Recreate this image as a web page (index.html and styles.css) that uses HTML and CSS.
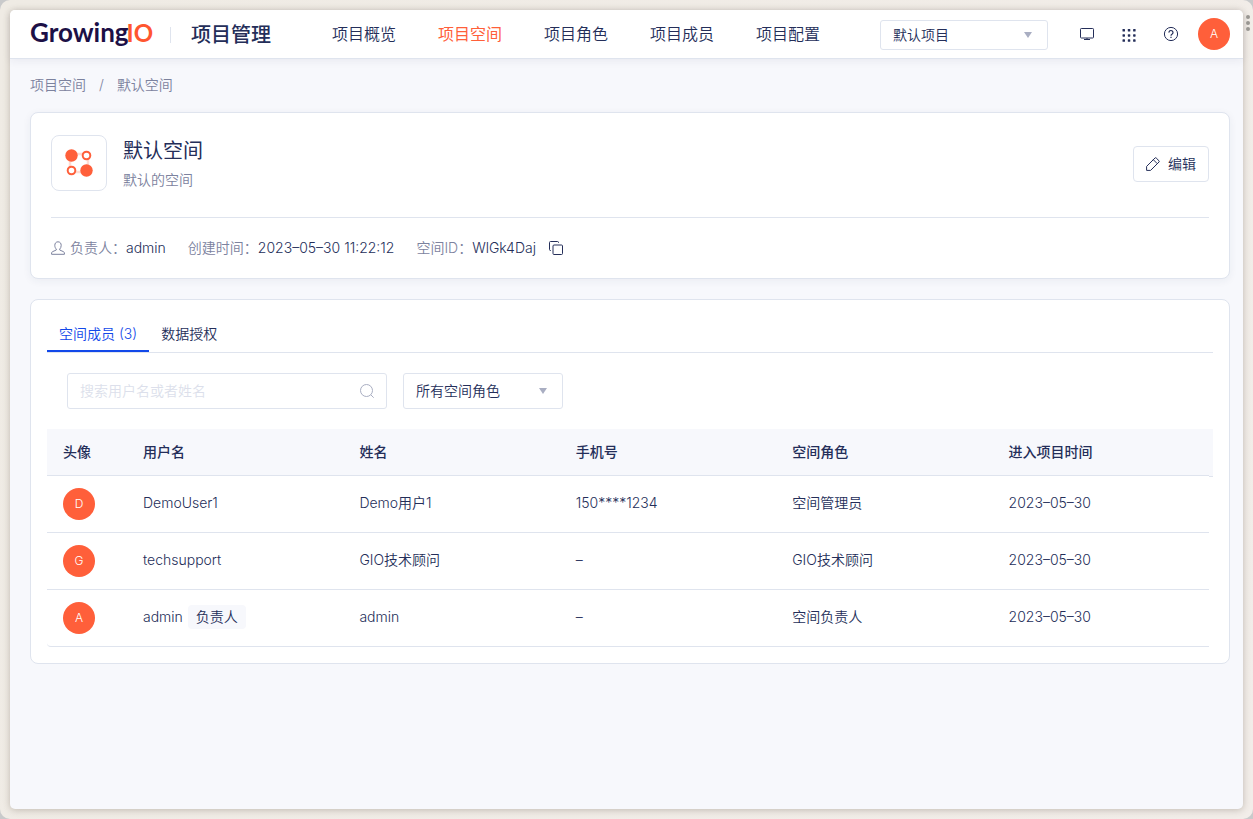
FILE: index.html
```html
<!DOCTYPE html>
<html lang="zh-CN">
<head>
<meta charset="utf-8">
<meta name="viewport" content="width=device-width, initial-scale=1">
<title>项目管理</title>
<link rel="stylesheet" href="styles.css">
</head>
<body>
<div class="frame">
  <div class="frame-dots"><i></i><i></i><i></i></div>
  <div class="window">
    <header class="topbar">
      <a class="logo" href="#">Growing<span class="logo-io">IO</span></a>
      <div class="product">项目管理</div>
      <nav class="nav">
        <a href="#">项目概览</a>
        <a href="#" class="active">项目空间</a>
        <a href="#">项目角色</a>
        <a href="#">项目成员</a>
        <a href="#">项目配置</a>
      </nav>
      <div class="select select-project">
        <select aria-label="项目"><option>默认项目</option></select>
        <svg class="caret" viewBox="0 0 10 8"><path d="M1 1h8L5 7z"/></svg>
      </div>
      <div class="tools">
        <button type="button" aria-label="大屏"><svg viewBox="0 0 16 16"><rect x="1.5" y="2.5" width="13" height="9.500" rx=".8"/><path d="M8 12v1.500M5 13.500h6"/></svg></button>
        <button type="button" aria-label="应用"><svg class="solid" viewBox="0 0 16 16"><rect x="1.500" y="3" width="2.500" height="2.500" rx=".6"/><rect x="6.800" y="3" width="2.500" height="2.500" rx=".6"/><rect x="12.100" y="3" width="2.500" height="2.500" rx=".6"/><rect x="1.500" y="8.200" width="2.500" height="2.500" rx=".6"/><rect x="6.800" y="8.200" width="2.500" height="2.500" rx=".6"/><rect x="12.100" y="8.200" width="2.500" height="2.500" rx=".6"/><rect x="1.500" y="13.300" width="2.500" height="2.500" rx=".6"/><rect x="6.800" y="13.300" width="2.500" height="2.500" rx=".6"/><rect x="12.100" y="13.300" width="2.500" height="2.500" rx=".6"/></svg></button>
        <button type="button" aria-label="帮助"><svg viewBox="0 0 16 16"><circle cx="8" cy="8" r="6.600"/><path stroke-width="1.200" d="M6 6.600a2 2 0 1 1 3.200 1.500C8.400 8.600 8 8.900 8 9.700M8 10.700v1.200"/></svg></button>
      </div>
      <span class="avatar">A</span>
    </header>

    <main class="content">
      <nav class="breadcrumb" aria-label="路径">
        <a href="#">项目空间</a><span>/</span><a href="#">默认空间</a>
      </nav>

      <section class="card summary">
        <div class="summary-head">
          <div class="space-icon">
            <svg viewBox="0 0 28 28"><rect x="5" y="5" width="18" height="18" fill="none" stroke="#ffdcd3" stroke-width="2.500"/><circle cx="6.500" cy="6.500" r="6.200" fill="#ff5f3a"/><circle cx="21.500" cy="21.500" r="6.200" fill="#ff5f3a"/><circle cx="21.500" cy="6.500" r="3.800" fill="#fff" stroke="#ff5f3a" stroke-width="2"/><circle cx="6.500" cy="21.500" r="3.800" fill="#fff" stroke="#ff5f3a" stroke-width="2"/></svg>
          </div>
          <div class="summary-text">
            <h1>默认空间</h1>
            <p>默认的空间</p>
          </div>
          <button type="button" class="edit"><svg viewBox="1 1 14 14"><path d="M1.600 14.400V10.400L10 2q.6-.6 1.200 0l2.800 2.800q.6.6 0 1.200L5.600 14.400zM8.300 3.700l4 4"/></svg>编辑</button>
        </div>
        <dl class="meta">
          <div><dt><svg viewBox="0 0 14 14"><path d="M7 .8c-2 0-3.200 1.500-3.200 3.600 0 1.700.7 2.900 1.500 3.700v.9L1.500 10.700Q.6 11.200.6 12v1.300h12.800V12q0-.8-.9-1.300L8.700 9v-.9c.8-.8 1.500-2 1.500-3.700C10.200 2.300 9 .8 7 .8z"/></svg>负责人：</dt><dd>admin</dd></div>
          <div><dt>创建时间：</dt><dd>2023–05–30 11:22:12</dd></div>
          <div><dt>空间ID：</dt><dd>WlGk4Daj</dd><dd><button type="button" class="copy" aria-label="复制"><svg viewBox="0 0 16 16"><rect x="5" y="5" width="9.500" height="9.500" rx="1"/><path d="M3 10.500h-.5q-1 0-1-1v-7q0-1 1-1h7q1 0 1 1V3"/></svg></button></dd></div>
        </dl>
      </section>

      <section class="card members">
        <div class="tabs" role="tablist">
          <button type="button" role="tab" aria-selected="true">空间成员 (3)</button>
          <button type="button" role="tab" aria-selected="false">数据授权</button>
        </div>
        <div class="filters">
          <div class="search">
            <input type="text" aria-label="搜索" placeholder="搜索用户名或者姓名">
            <svg viewBox="0 0 16 16"><circle cx="7.500" cy="7.500" r="6"/><path d="M11.800 11.800l2.900 2.900"/></svg>
          </div>
          <div class="select select-role">
            <select aria-label="空间角色"><option>所有空间角色</option></select>
            <svg class="caret" viewBox="0 0 10 8"><path d="M1 1h8L5 7z"/></svg>
          </div>
        </div>
        <div class="table-wrap">
          <table>
            <thead>
              <tr><th class="col-avatar">头像</th><th>用户名</th><th>姓名</th><th>手机号</th><th>空间角色</th><th>进入项目时间</th></tr>
            </thead>
            <tbody>
              <tr><td><span class="avatar">D</span></td><td>DemoUser1</td><td>Demo用户1</td><td>150****1234</td><td>空间管理员</td><td>2023–05–30</td></tr>
              <tr><td><span class="avatar">G</span></td><td>techsupport</td><td>GIO技术顾问</td><td>–</td><td>GIO技术顾问</td><td>2023–05–30</td></tr>
              <tr><td><span class="avatar">A</span></td><td>admin<span class="tag">负责人</span></td><td>admin</td><td>–</td><td>空间负责人</td><td>2023–05–30</td></tr>
            </tbody>
          </table>
        </div>
      </section>
    </main>
  </div>
</div>
</body>
</html>
```
FILE: styles.css
```css
:root {
  --ink: #242e59;
  --muted: #7c829e;
  --line: #dfe4ee;
  --page: #f7f8fc;
  --accent: #ff5f3a;
  --blue: #1248e9;
}

* {
  box-sizing: border-box;
}

body {
  margin: 0;
  background: #c9cacb;
  color: var(--ink);
  font: 350 14px/22px Inter, "Noto Sans CJK SC", sans-serif;
}

a {
  color: inherit;
  text-decoration: none;
}

button,
input,
select {
  font: inherit;
  color: inherit;
}

button {
  padding: 0;
  border: 0;
  background: none;
  cursor: pointer;
}

svg {
  display: block;
  fill: none;
  stroke: currentColor;
}

.frame {
  position: relative;
  display: flex;
  min-height: 100vh;
  padding: 10px;
  border-radius: 10px;
  background: linear-gradient(120deg, #efebe4, #f2ede9);
}

.frame-dots {
  position: absolute;
  top: 15px;
  right: 3px;
  display: grid;
  gap: 2px;
}

.frame-dots i {
  width: 4px;
  height: 4px;
  border-radius: 2px;
  background: #999692;
}

.window {
  flex: 1;
  min-width: 0;
  border-radius: 5px;
  background: var(--page);
  box-shadow: 0 1px 7px rgba(80, 65, 50, 0.3);
}

/* Top bar */
.topbar {
  display: flex;
  align-items: center;
  height: 49px;
  padding: 0 13px 0 20px;
  border-bottom: 1px solid var(--line);
  border-radius: 5px 5px 0 0;
  background: #fff;
  box-shadow: 0 2px 8px rgba(36, 46, 89, 0.07);
}

.logo {
  width: 120px;
  padding-bottom: 4px;
  color: #1c1046;
  font: 700 26px/32px Lato, sans-serif;
  white-space: nowrap;
}

.logo-io {
  margin-left: -2px;
  color: #ff5630;
  font-size: 24px;
}

.product {
  display: flex;
  align-items: center;
  margin-left: 20px;
  padding-top: 2px;
  font-size: 20px;
  font-weight: 500;
  white-space: nowrap;
}

.product::before {
  content: "";
  width: 1px;
  height: 16px;
  margin-right: 20px;
  background: var(--line);
}

.nav {
  display: flex;
  gap: 42px;
  margin-left: 61px;
  font-size: 16px;
  white-space: nowrap;
}

.nav .active {
  color: var(--accent);
  font-weight: 400;
}

.select {
  position: relative;
}

.select select {
  width: 100%;
  height: 36px;
  padding: 0 32px 0 12px;
  border: 1px solid var(--line);
  border-radius: 3px;
  background: #fff;
  appearance: none;
}

.caret {
  position: absolute;
  top: 50%;
  right: 15px;
  width: 10px;
  height: 8px;
  margin-top: -4px;
  fill: #a9aec2;
  stroke: none;
  pointer-events: none;
}

.select-project {
  width: 168px;
  margin-top: 2px;
  margin-left: auto;
}

.select-project select {
  display: block;
  height: 30px;
}

.tools {
  display: flex;
  gap: 26px;
  margin: 0 19px 0 31px;
}

.tools svg {
  width: 16px;
  height: 16px;
}

.tools .solid {
  fill: currentColor;
  stroke: none;
}

.avatar {
  display: grid;
  place-items: center;
  width: 32px;
  height: 32px;
  border-radius: 50%;
  background: var(--accent);
  color: #fff;
  font-size: 12px;
}

/* Content */
.content {
  padding: 15px 13px 20px 20px;
}

.breadcrumb {
  display: flex;
  gap: 13px;
  margin-bottom: 16px;
  color: var(--muted);
}

.card {
  border: 1px solid var(--line);
  border-radius: 8px;
  background: #fff;
}

.summary {
  padding: 22px 20px 0;
  margin-bottom: 20px;
  box-shadow: 0 2px 8px rgba(36, 46, 89, 0.06);
}

.summary-head {
  display: flex;
  align-items: center;
  padding-bottom: 26px;
  border-bottom: 1px solid var(--line);
}

.space-icon {
  display: grid;
  place-items: center;
  width: 56px;
  height: 56px;
  border: 1px solid var(--line);
  border-radius: 8px;
}

.space-icon svg {
  width: 28px;
  height: 28px;
  stroke: none;
}

.summary-text {
  flex: 1;
  margin-left: 16px;
}

.summary-text h1 {
  margin: 2px 0 4px;
  font-size: 20px;
  font-weight: 400;
  line-height: 28px;
}

.summary-text p {
  margin: 0;
  color: var(--muted);
}

.edit {
  display: flex;
  align-items: center;
  gap: 8px;
  height: 36px;
  margin-top: 2px;
  padding: 0 12px;
  border: 1px solid var(--line);
  border-radius: 4px;
}

.edit svg {
  width: 14px;
  height: 14px;
}

.copy svg {
  width: 16px;
  height: 16px;
}

.meta {
  display: flex;
  align-items: center;
  gap: 22px;
  height: 60px;
  margin: 0;
}

.meta div,
.meta dt {
  display: flex;
  align-items: center;
}

.meta dt {
  color: var(--muted);
}

.meta dt svg {
  width: 14px;
  height: 14px;
  margin-right: 5px;
}

.meta dd {
  margin: 0;
}

.copy {
  display: block;
  margin-left: 12px;
}

/* Members */
.members {
  padding: 16px;
}

.tabs {
  display: flex;
  border-bottom: 1px solid var(--line);
}

.tabs button {
  height: 36px;
  padding: 2px 12px 0;
  border-bottom: 2px solid transparent;
}

.tabs [aria-selected="true"] {
  border-color: var(--blue);
  color: var(--blue);
}

.filters {
  display: flex;
  gap: 16px;
  padding: 20px;
}

.search {
  position: relative;
  width: 320px;
}

.search input {
  width: 100%;
  height: 36px;
  padding: 0 36px 2px 12px;
  border: 1px solid var(--line);
  border-radius: 3px;
  background: #fff;
}

.search input::placeholder {
  color: #dcdfeb;
}

.search svg {
  position: absolute;
  top: 10px;
  right: 12px;
  width: 16px;
  height: 16px;
  color: #a9aec2;
}

.select-role {
  width: 160px;
}

.table-wrap {
  padding-right: 4px;
}

table {
  width: 100%;
  border-collapse: separate;
  border-spacing: 0;
  table-layout: fixed;
}

th,
td {
  padding: 0 16px;
  border-bottom: 1px solid var(--line);
  text-align: left;
  white-space: nowrap;
}

th {
  position: relative;
  height: 47px;
  background: var(--page);
  font-weight: 500;
}

th:last-child::after {
  content: "";
  position: absolute;
  top: 0;
  left: 100%;
  width: 4px;
  height: 47px;
  border-bottom: 1px solid var(--line);
  background: var(--page);
}

td {
  height: 57px;
  padding-bottom: 2px;
}

td:first-child {
  padding-bottom: 0;
}

tr:last-child td:first-child {
  border-bottom-left-radius: 4px;
}

.col-avatar {
  width: 80px;
}

.tag {
  display: inline-block;
  margin-left: 5px;
  padding: 1px 8px;
  border-radius: 4px;
  background: var(--page);
}
```
